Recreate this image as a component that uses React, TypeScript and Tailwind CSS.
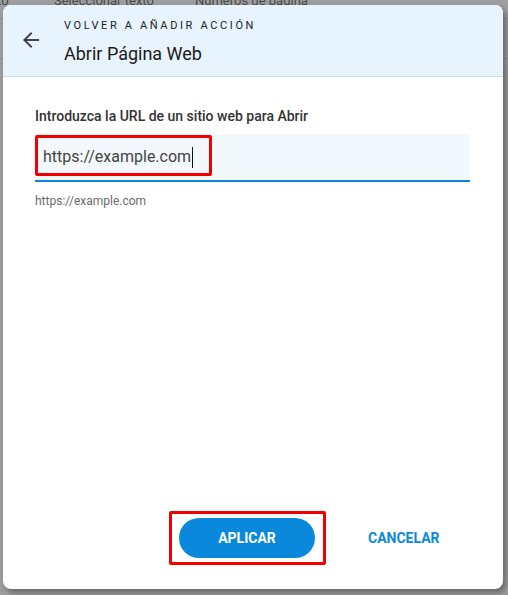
import React from "react";

export default function App() {
  return (
    <div
      className="relative w-[508px] h-[595px] overflow-hidden bg-[#9e9e9e]"
      style={{ fontFamily: "Roboto, 'Liberation Sans', sans-serif" }}
    >
      {/* background page (dimmed) */}
      <div className="flex items-center h-[10px] -mt-[4px] text-[13px] text-[#4a4a4a] whitespace-nowrap">
        <span className="-ml-[3px] w-[57px]">to</span>
        <span className="w-[141px]">Seleccionar texto</span>
        <span>Números de página</span>
      </div>
      <div className="h-px bg-[#8f8f8f] mt-[12px]" />
      <div className="h-px bg-[#8f8f8f] mt-[39px]" />

      {/* dialog */}
      <div className="absolute left-[3px] top-[5px] w-[500px] h-[584px] bg-white rounded-[8px] shadow-[3px_4px_6px_rgba(0,0,0,0.35)] flex flex-col overflow-hidden">
        <div className="h-[72px] bg-[#e7f3fd] border-b border-[#c8dbe9] flex items-start shrink-0">
          <div className="w-[24px] h-[24px] ml-[16px] mt-[23px] text-[#444]">
            <svg viewBox="0 0 24 24" width="24" height="24" fill="currentColor">
              <path d="M20 11H7.83l5.59-5.59L12 4l-8 8 8 8 1.41-1.41L7.83 13H20v-2z" />
            </svg>
          </div>
          <div className="ml-[21px] flex flex-col">
            <div className="mt-[13px] text-[11px] leading-[16px] tracking-[0.24em] text-[#222]">
              VOLVER A AÑADIR ACCIÓN
            </div>
            <div className="mt-[9px] text-[18px] leading-[22px] text-[#1a1a1a]">
              Abrir Página Web
            </div>
          </div>
        </div>

        <div className="flex-1 flex flex-col px-[32px]">
          <div className="mt-[29px] text-[14px] leading-[20px] font-medium text-[#333]">
            Introduzca la URL de un sitio web para Abrir
          </div>
          <div className="relative mt-[8px] h-[48px] w-[435px] bg-[#f3f8fc] border-b-2 border-[#0a86d8] flex items-center">
            <span className="ml-[8px] text-[16px] text-[#444] leading-[20px]">https://example.com</span>
            <span className="ml-[1px] w-px h-[21px] bg-[#111]" />
            <div className="absolute left-0 top-[1px] w-[177px] h-[41px] border-[3px] border-[#f20000] rounded-[2px]" />
          </div>
          <div className="mt-[12px] text-[12px] leading-[15px] text-[#6b6b6b]">https://example.com</div>

          <div className="flex-1" />

          <div className="flex items-center mb-[31px]">
            <div className="relative ml-[144px]">
              <button className="w-[136px] h-[40px] rounded-full bg-[#0a89dc] text-white text-[14px] font-bold">
                APLICAR
              </button>
              <div className="absolute -left-[10px] -top-[7px] w-[157px] h-[54px] border-[3px] border-[#f20000] rounded-[2px]" />
            </div>
            <button className="ml-[53px] text-[14px] font-bold text-[#0a89dc]">CANCELAR</button>
          </div>
        </div>
      </div>
    </div>
  );
}
